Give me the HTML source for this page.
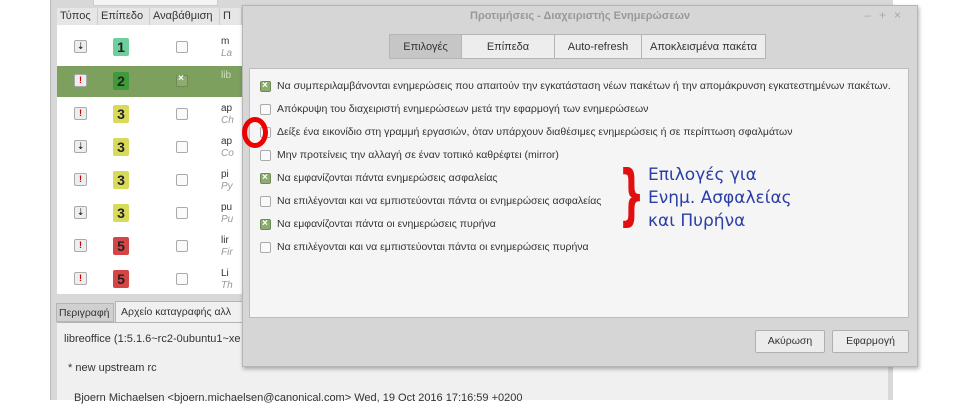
<!DOCTYPE html>
<html><head><meta charset="utf-8"><style>
*{box-sizing:border-box;margin:0;padding:0}
body{width:960px;height:400px;background:#fff;position:relative;overflow:hidden;font-family:"Liberation Sans","DejaVu Sans",sans-serif;color:#333}
.abs{position:absolute}
.main{left:50px;top:0;width:843px;height:400px;background:#d8d8d8;border-left:1px solid #bbb}
.list{left:57px;top:8px;width:190px;height:286px;background:#fff}
.hdr{top:8px;height:17px;background:#e6e6e6;font-size:11px;line-height:17px;color:#333;border-right:1px solid #ccc;padding-left:3px}
.ic{width:13px;height:13px;border:1px solid #aaa;border-radius:2px;background:#eee;font-size:9px;line-height:11px;text-align:center;font-weight:bold}
.lv{width:16px;height:18px;border-radius:2px;font-weight:bold;font-size:14px;line-height:18px;text-align:center;color:#222}
.cb{width:12px;height:12px;border:1px solid #aaa;border-radius:2px;background:#fafafa}
.dlg{left:242px;top:5px;width:676px;height:362px;background:#d6d6d6;border:1px solid #b5b5b5;box-shadow:1px 2px 4px rgba(0,0,0,.3)}
.tab{top:28px;height:25px;font-size:11px;line-height:25px;text-align:center;background:#ededed;border:1px solid #b5b5b5}
.panel{left:6px;top:62px;width:660px;height:250px;background:#f5f5f5;border:1px solid #bdbdbd}
.opt{left:10px;font-size:10.5px;height:14px;line-height:14px;white-space:nowrap;color:#333}
.opt .cb{display:inline-block;vertical-align:middle;margin-right:6px;width:11px;height:11px}
.ck{background:#8fac70!important;border-color:#6d8a55!important;position:relative}
.ck:after{content:"×";position:absolute;left:1px;top:-3px;font-size:10px;color:#fff;font-weight:bold}
.btn{top:324px;height:23px;width:70px;background:#ececec;border:1px solid #b0b0b0;border-radius:2px;font-size:10.5px;line-height:21px;text-align:center}
.blue{color:#2a3ea5;font-size:17px;line-height:23px;font-family:"DejaVu Sans",sans-serif}
</style></head><body>
<div class="abs main"></div>
<div class="abs" style="left:93px;top:0;width:125px;height:6px;background:#f4f4f4;border:1px solid #ccc;border-top:none"></div>
<div class="abs list"></div>
<div class="abs hdr" style="left:57px;width:41px">Τύπος</div>
<div class="abs hdr" style="left:98px;width:52px">Επίπεδο</div>
<div class="abs hdr" style="left:150px;width:70px">Αναβάθμιση</div>
<div class="abs hdr" style="left:220px;width:22px">Π</div>
<div class="abs" style="left:57px;top:66px;width:185px;height:31px;background:#7da05e"></div>

<div class="abs ic" style="left:74px;top:40px">⇣</div><div class="abs lv" style="left:113px;top:38px;background:#6fcf9c">1</div><div class="abs cb" style="left:176px;top:41px"></div>
<div class="abs ic" style="left:74px;top:74px;color:#c00">!</div><div class="abs lv" style="left:113px;top:72px;background:#3f9a3a">2</div><div class="abs cb ck" style="left:176px;top:75px"></div>
<div class="abs ic" style="left:74px;top:107px;color:#c00">!</div><div class="abs lv" style="left:113px;top:105px;background:#dada5a">3</div><div class="abs cb" style="left:176px;top:108px"></div>
<div class="abs ic" style="left:74px;top:140px">⇣</div><div class="abs lv" style="left:113px;top:138px;background:#dada5a">3</div><div class="abs cb" style="left:176px;top:141px"></div>
<div class="abs ic" style="left:74px;top:173px;color:#c00">!</div><div class="abs lv" style="left:113px;top:171px;background:#dada5a">3</div><div class="abs cb" style="left:176px;top:174px"></div>
<div class="abs ic" style="left:74px;top:206px">⇣</div><div class="abs lv" style="left:113px;top:204px;background:#dada5a">3</div><div class="abs cb" style="left:176px;top:207px"></div>
<div class="abs ic" style="left:74px;top:239px;color:#c00">!</div><div class="abs lv" style="left:113px;top:237px;background:#d64545">5</div><div class="abs cb" style="left:176px;top:240px"></div>
<div class="abs ic" style="left:74px;top:272px;color:#c00">!</div><div class="abs lv" style="left:113px;top:270px;background:#d64545">5</div><div class="abs cb" style="left:176px;top:273px"></div>
<div class="abs" style="left:221px;top:36px;font-size:10px;line-height:12px;color:#333">m<br><i style="color:#999">La</i></div>
<div class="abs" style="left:221px;top:70px;font-size:10px;line-height:12px;color:#cfe0c0">lib</div>
<div class="abs" style="left:221px;top:103px;font-size:10px;line-height:12px">ap<br><i style="color:#999">Ch</i></div>
<div class="abs" style="left:221px;top:136px;font-size:10px;line-height:12px">ap<br><i style="color:#999">Co</i></div>
<div class="abs" style="left:221px;top:169px;font-size:10px;line-height:12px">pi<br><i style="color:#999">Py</i></div>
<div class="abs" style="left:221px;top:202px;font-size:10px;line-height:12px">pu<br><i style="color:#999">Pu</i></div>
<div class="abs" style="left:221px;top:235px;font-size:10px;line-height:12px">lir<br><i style="color:#999">Fir</i></div>
<div class="abs" style="left:221px;top:268px;font-size:10px;line-height:12px">Li<br><i style="color:#999">Th</i></div>

<div class="abs" style="left:56px;top:303px;width:58px;height:19px;background:#d0d0d0;border:1px solid #b5b5b5;font-size:10.5px;line-height:18px;padding-left:2px">Περιγραφή</div>
<div class="abs" style="left:115px;top:301px;width:130px;height:22px;background:#f0f0f0;border:1px solid #b5b5b5;border-bottom:none;font-size:10.5px;line-height:20px;padding-left:5px;white-space:nowrap;overflow:hidden">Αρχείο καταγραφής αλλ</div>
<div class="abs" style="left:57px;top:322px;width:831px;height:78px;background:#f0f0f0;border-top:1px solid #b5b5b5"></div>
<div class="abs" style="left:64px;top:333px;font-size:11px">libreoffice (1:5.1.6~rc2-0ubuntu1~xe</div>
<div class="abs" style="left:68px;top:362px;font-size:11px">* new upstream rc</div>
<div class="abs" style="left:74px;top:392px;font-size:11px;white-space:nowrap">Bjoern Michaelsen &lt;bjoern.michaelsen@canonical.com&gt;  Wed, 19 Oct 2016 17:16:59 +0200</div>

<div class="abs dlg">
 <div class="abs" style="left:0;top:0;width:674px;height:20px;text-align:center;font-size:11px;line-height:20px;color:#999;font-weight:bold">Προτιμήσεις - Διαχειριστής Ενημερώσεων</div>
 <div class="abs" style="right:8px;top:2px;font-size:12px;color:#aaa;letter-spacing:8px">–+×</div>
 <div class="abs tab" style="left:146px;width:73px;background:#c6c6c6">Επιλογές</div>
 <div class="abs tab" style="left:218px;width:94px">Επίπεδα</div>
 <div class="abs tab" style="left:311px;width:88px">Auto-refresh</div>
 <div class="abs tab" style="left:398px;width:125px">Αποκλεισμένα πακέτα</div>
 <div class="abs panel">
  <div class="abs opt" style="top:10px"><span class="cb ck"></span>Να συμπεριλαμβάνονται ενημερώσεις που απαιτούν την εγκατάσταση νέων πακέτων ή την απομάκρυνση εγκατεστημένων πακέτων.</div>
  <div class="abs opt" style="top:33px"><span class="cb"></span>Απόκρυψη του διαχειριστή ενημερώσεων μετά την εφαρμογή των ενημερώσεων</div>
  <div class="abs opt" style="top:56px"><span class="cb"></span>Δείξε ένα εικονίδιο στη γραμμή εργασιών, όταν υπάρχουν διαθέσιμες ενημερώσεις ή σε περίπτωση σφαλμάτων</div>
  <div class="abs opt" style="top:79px"><span class="cb"></span>Μην προτείνεις την αλλαγή σε έναν τοπικό καθρέφτει (mirror)</div>
  <div class="abs opt" style="top:102px"><span class="cb ck"></span>Να εμφανίζονται πάντα ενημερώσεις ασφαλείας</div>
  <div class="abs opt" style="top:125px"><span class="cb"></span>Να επιλέγονται και να εμπιστεύονται πάντα οι ενημερώσεις ασφαλείας</div>
  <div class="abs opt" style="top:148px"><span class="cb ck"></span>Να εμφανίζονται πάντα οι ενημερώσεις πυρήνα</div>
  <div class="abs opt" style="top:171px"><span class="cb"></span>Να επιλέγονται και να εμπιστεύονται πάντα οι ενημερώσεις πυρήνα</div>
  <div class="abs" style="left:358px;top:90px;font-size:66px;line-height:72px;color:#e01010;font-weight:bold;font-family:'DejaVu Sans',sans-serif;transform:scaleX(.55)">}</div>
  <div class="abs blue" style="left:398px;top:95px">Επιλογές για<br>Ενημ. Ασφαλείας<br>και Πυρήνα</div>
 </div>
 <div class="abs btn" style="left:512px">Ακύρωση</div>
 <div class="abs btn" style="left:589px;width:77px">Εφαρμογή</div>
</div>
<div class="abs" style="left:242px;top:117px;width:26px;height:31px;border:5px solid #e00;border-radius:50%"></div>
</body></html>
